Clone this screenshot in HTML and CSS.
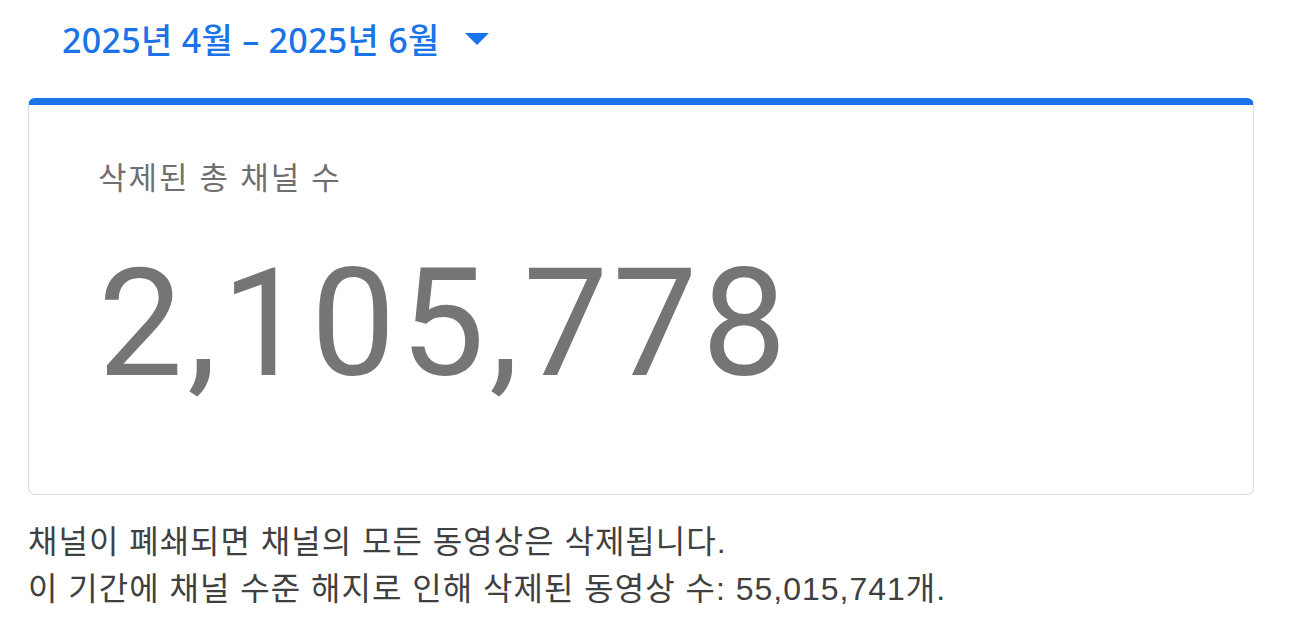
FILE: index.html
```html
<!DOCTYPE html>
<html lang="ko">
<head>
    <meta charset="UTF-8">
    <title>삭제된 채널</title>
    <link rel="stylesheet" href="styles.css">
</head>
<body>
    <div class="page">
        <button class="range-picker" type="button">
            <span>2025년 4월 – 2025년 6월</span>
            <svg class="caret" width="24" height="24" viewBox="0 0 24 24"><path d="M0 7h24l-12 12z" fill="#1a73e8"/></svg>
        </button>

        <div class="card">
            <div class="card-label">삭제된 총 채널 수</div>
            <div class="card-value">2,105,778</div>
        </div>

        <p class="note">채널이 폐쇄되면 채널의 모든 동영상은 삭제됩니다.<br>
        이 기간에 채널 수준 해지로 인해 삭제된 동영상 수: 55,015,741개.</p>
    </div>
</body>
</html>
```

FILE: styles.css
```css
body {
    margin: 0;
    background: #fff;
    font-family: "Noto Sans", "Noto Sans CJK KR", sans-serif;
}

.page {
    padding: 12px 38px 0 28px;
}

.range-picker {
    display: flex;
    align-items: center;
    gap: 25px;
    background: none;
    border: none;
    padding: 0 0 0 34px;
    color: #1a73e8;
    font-family: "Noto Sans", "Noto Sans CJK KR", sans-serif;
    font-size: 34px;
    font-weight: 500;
    letter-spacing: 0.3px;
    height: 52px;
    cursor: pointer;
}

.card {
    margin-top: 34px;
    border: 1px solid #dadce0;
    border-top: 7px solid #1a73e8;
    border-radius: 7px;
    height: 389px;
    padding: 0 0 0 69px;
}

.card-label {
    margin-top: 48px;
    color: #6f6f6f;
    font-size: 31px;
    letter-spacing: 2px;
}

.card-value {
    margin-top: 50px;
    color: #757575;
    font-size: 151px;
    line-height: 1;
    letter-spacing: 4.4px;
    font-family: "Roboto", sans-serif;
}

.note {
    margin: 24px 0 0;
    color: #404040;
    font-family: "Liberation Sans", "Noto Sans CJK KR", sans-serif;
    font-size: 32px;
    line-height: 47px;
    letter-spacing: 1px;
}
```
